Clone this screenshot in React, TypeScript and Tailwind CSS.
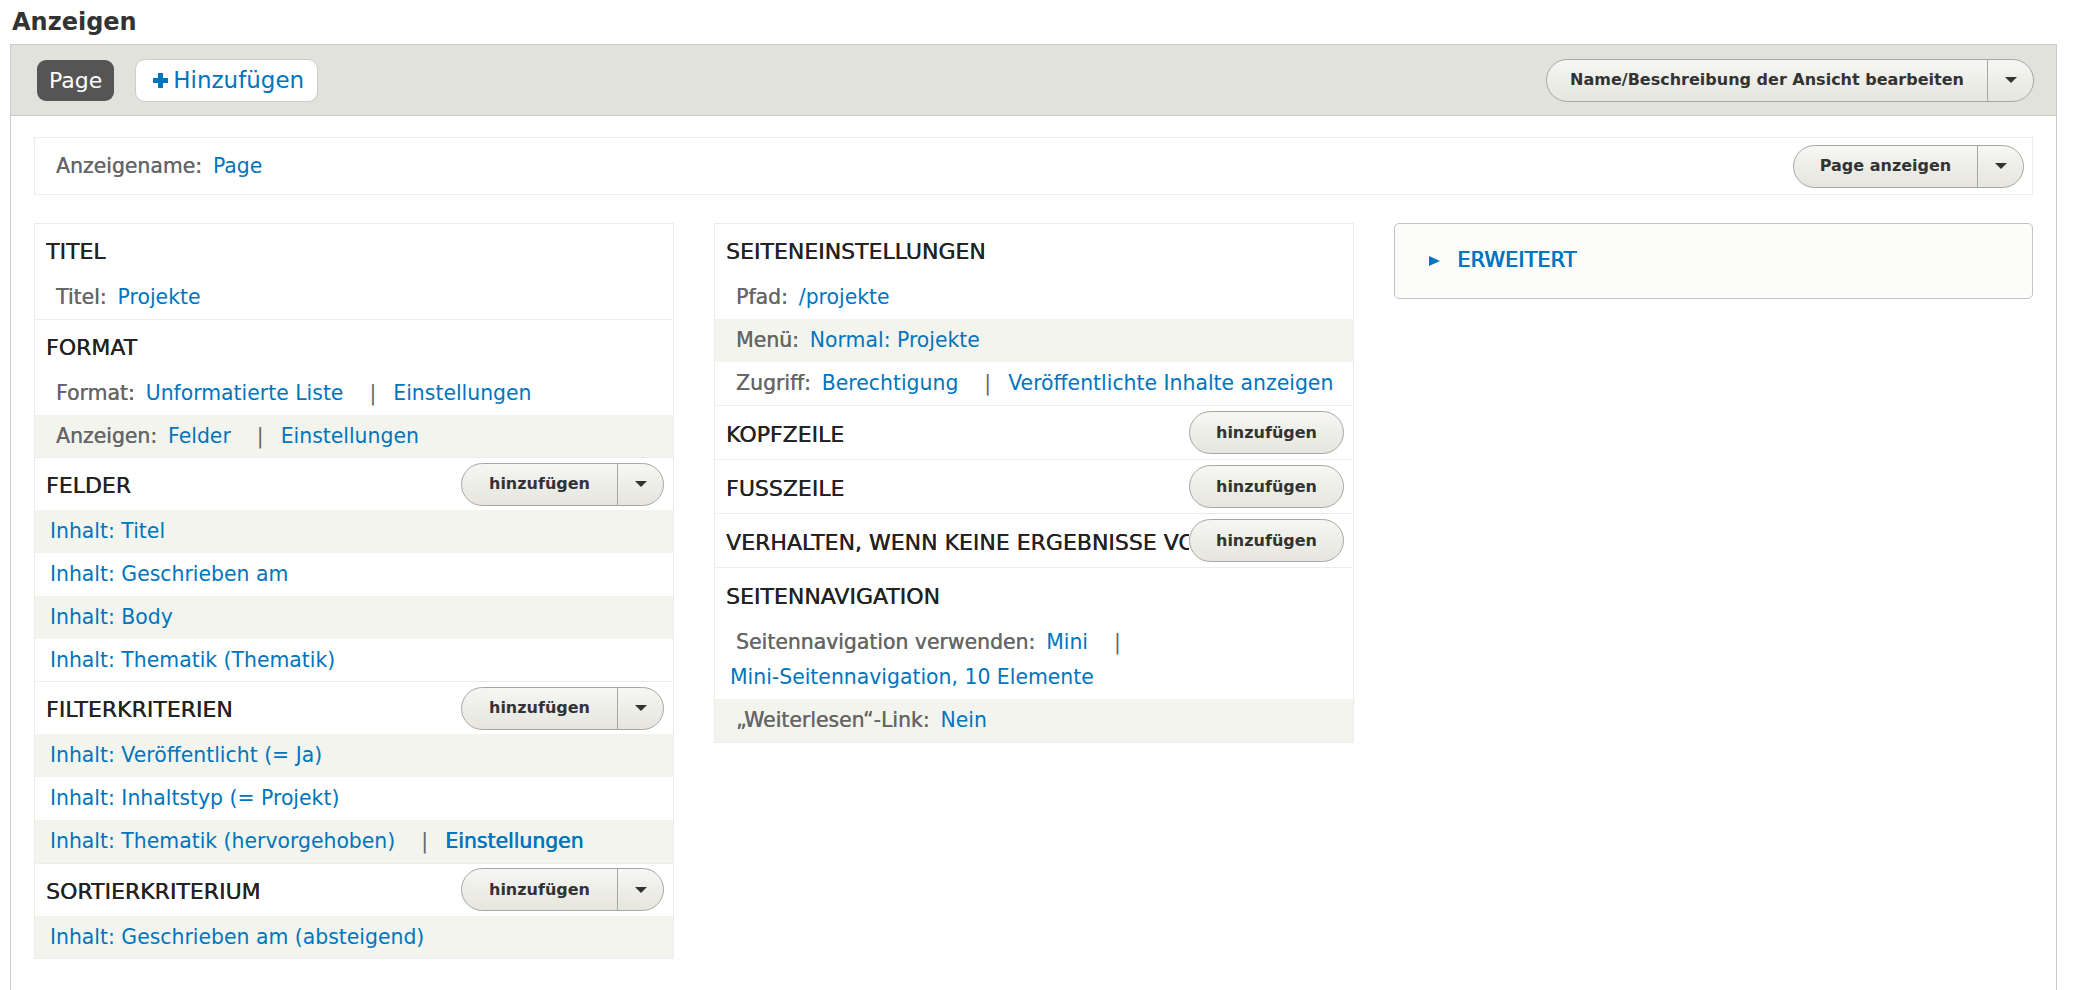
import type { FunctionComponent, ReactNode } from "react";

interface BucketProps {
  title: string;
  action?: "split" | "single";
  children?: ReactNode;
}

interface RowProps {
  gray?: boolean;
  compact?: boolean;
  children: ReactNode;
}

const Arrow: FunctionComponent = () => (
  <span className="h-0 w-0 border-x-[6px] border-t-[6px] border-x-transparent border-t-[#333]" />
);

const SplitButton: FunctionComponent<{ label: string; width: string }> = ({
  label,
  width,
}) => (
  <div className="flex h-[43px] shrink-0 items-stretch rounded-full border border-[#a6a6a6] bg-linear-to-b from-[#f6f6f3] to-[#e6e6de] text-[16px] font-bold text-[#333]">
    <span className={`flex items-center justify-center ${width}`}>
      {label}
    </span>
    <span className="flex w-[46px] items-center justify-center border-l border-[#a6a6a6]">
      <Arrow />
    </span>
  </div>
);

const SingleButton: FunctionComponent = () => (
  <div className="flex h-[43px] w-[155px] shrink-0 items-center justify-center rounded-full border border-[#a6a6a6] bg-linear-to-b from-[#f6f6f3] to-[#e6e6de] text-[16px] font-bold text-[#333]">
    hinzufügen
  </div>
);

const Label: FunctionComponent<{ children: ReactNode }> = ({ children }) => (
  <span className="ml-[6px] mr-[11px] text-[#666] [text-shadow:0.35px_0_0_#666]">
    {children}
  </span>
);

const Link: FunctionComponent<{ children: ReactNode; strong?: boolean }> = ({
  children,
  strong,
}) => (
  <span
    className={`whitespace-nowrap text-[#0074bd] ${
      strong ? "[text-shadow:0.7px_0_0_#0074bd]" : ""
    }`}
  >
    {children}
  </span>
);

const Sep: FunctionComponent = () => (
  <span className="ml-[26px] mr-[17px] text-[#666]">|</span>
);

const Row: FunctionComponent<RowProps> = ({ gray, compact, children }) => (
  <div
    className={`py-[4px] pl-[15px] pr-[12px] ${
      compact ? "leading-[34.75px]" : "leading-[35px]"
    } ${gray ? "bg-[#f3f4ee]" : ""}`}
  >
    {children}
  </div>
);

const Bucket: FunctionComponent<BucketProps & { tall?: boolean }> = ({
  title,
  action,
  tall,
  children,
}) => (
  <div className="border-b border-[#ececec] last:border-b-0">
    <div
      className={`flex items-center pl-[11px] pr-[9px] ${
        tall ? "h-[53px]" : "h-[52px]"
      }`}
    >
      <h3 className="min-w-0 flex-1 overflow-hidden whitespace-nowrap pt-[4px] text-[22px] leading-[30px] font-normal text-[#222] [text-shadow:0.35px_0_0_#222]">
        {title}
      </h3>
      {action === "split" && <SplitButton label="hinzufügen" width="w-[155px]" />}
      {action === "single" && <SingleButton />}
    </div>
    {children}
  </div>
);

const App: FunctionComponent = () => {
  return (
    <div className="min-h-screen bg-white font-['DejaVu_Sans',sans-serif] text-[20.4px] text-[#333]">
      <h1 className="flex h-[44px] items-center pl-[12px] text-[24px] font-bold text-[#333]">
        Anzeigen
      </h1>
      <section className="ml-[10px] w-[2047px] border border-[#ccc]">
        <div className="flex h-[71px] items-center border-b border-[#ccc] bg-[#e1e2dc] pl-[26px] pr-[22px]">
          <span className="flex h-[41px] items-center rounded-[9px] bg-[#555] px-[12px] text-[22px] text-white">
            Page
          </span>
          <span className="ml-[21px] flex h-[43px] items-center rounded-[10px] border border-[#ccc] bg-white pl-[17px] pr-[13px] text-[23px] text-[#0074bd]">
            <svg width="15" height="15" viewBox="0 0 15 15" className="mr-[5px]">
              <path d="M5 0h5v5h5v5h-5v5H5v-5H0V5h5z" fill="#0074bd" />
            </svg>
            Hinzufügen
          </span>
          <div className="ml-auto">
            <SplitButton
              label="Name/Beschreibung der Ansicht bearbeiten"
              width="w-[440px]"
            />
          </div>
        </div>

        <div className="px-[23px] pb-[60px] pt-[21px]">
          <div className="flex h-[58px] items-center border border-[#ececec] pl-[15px] pr-[8px]">
            <Label>Anzeigename:</Label>
            <Link>Page</Link>
            <div className="ml-auto">
              <SplitButton label="Page anzeigen" width="w-[183px]" />
            </div>
          </div>

          <div className="mt-[28px] grid grid-cols-[640px_640px_1fr] items-start gap-x-[40px]">
            <div className="border border-[#ececec]">
              <Bucket title="TITEL">
                <Row compact>
                  <Label>Titel:</Label>
                  <Link>Projekte</Link>
                </Row>
              </Bucket>
              <Bucket title="FORMAT">
                <Row compact>
                  <Label>Format:</Label>
                  <Link>Unformatierte Liste</Link>
                  <Sep />
                  <Link>Einstellungen</Link>
                </Row>
                <Row compact gray>
                  <Label>Anzeigen:</Label>
                  <Link>Felder</Link>
                  <Sep />
                  <Link>Einstellungen</Link>
                </Row>
              </Bucket>
              <Bucket title="FELDER" action="split">
                <Row compact gray>
                  <Link>Inhalt: Titel</Link>
                </Row>
                <Row compact>
                  <Link>Inhalt: Geschrieben am</Link>
                </Row>
                <Row compact gray>
                  <Link>Inhalt: Body</Link>
                </Row>
                <Row compact>
                  <Link>Inhalt: Thematik (Thematik)</Link>
                </Row>
              </Bucket>
              <Bucket title="FILTERKRITERIEN" action="split">
                <Row compact gray>
                  <Link>Inhalt: Veröffentlicht (= Ja)</Link>
                </Row>
                <Row compact>
                  <Link>Inhalt: Inhaltstyp (= Projekt)</Link>
                </Row>
                <Row compact gray>
                  <Link>Inhalt: Thematik (hervorgehoben)</Link>
                  <Sep />
                  <Link strong>Einstellungen</Link>
                </Row>
              </Bucket>
              <Bucket title="SORTIERKRITERIUM" action="split">
                <Row compact gray>
                  <Link>Inhalt: Geschrieben am (absteigend)</Link>
                </Row>
              </Bucket>
            </div>

            <div className="border border-[#ececec]">
              <Bucket title="SEITENEINSTELLUNGEN">
                <Row>
                  <Label>Pfad:</Label>
                  <Link>/projekte</Link>
                </Row>
                <Row gray>
                  <Label>Menü:</Label>
                  <Link>Normal: Projekte</Link>
                </Row>
                <Row>
                  <Label>Zugriff:</Label>
                  <Link>Berechtigung</Link>
                  <Sep />
                  <Link>Veröffentlichte Inhalte anzeigen</Link>
                </Row>
              </Bucket>
              <Bucket title="KOPFZEILE" action="single" tall />
              <Bucket title="FUSSZEILE" action="single" tall />
              <Bucket
                title="VERHALTEN, WENN KEINE ERGEBNISSE VORHANDEN SIND"
                action="single"
                tall
              />
              <Bucket title="SEITENNAVIGATION" tall>
                <Row>
                  <Label>Seitennavigation verwenden:</Label>
                  <Link>Mini</Link>
                  <Sep />{" "}
                  <Link>Mini-Seitennavigation, 10 Elemente</Link>
                </Row>
                <Row gray>
                  <Label>„Weiterlesen“-Link:</Label>
                  <Link>Nein</Link>
                </Row>
              </Bucket>
            </div>

            <div className="flex h-[76px] items-center rounded-[5px] border border-[#c3c3c3] bg-[#fcfcfa] pl-[34px]">
              <span className="h-0 w-0 border-y-[5px] border-l-[11px] border-y-transparent border-l-[#0074bd]" />
              <span className="ml-[17px] text-[21px] text-[#0074bd] [text-shadow:0.7px_0_0_#0074bd]">
                ERWEITERT
              </span>
            </div>
          </div>
        </div>
      </section>
    </div>
  );
};

export default App;
